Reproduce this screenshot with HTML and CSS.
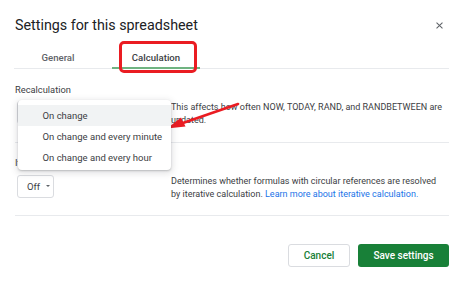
FILE: index.html
```html
<!DOCTYPE html>
<html>
<head>
<meta charset="utf-8">
<title>Settings for this spreadsheet</title>
<link rel="stylesheet" href="styles.css">
</head>
<body>
<div class="dialog">
  <header class="head">
    <h1 class="title">Settings for this spreadsheet</h1>
    <svg class="close" viewBox="0 0 8 8" aria-label="Close"><path d="M0.6 0.6L7.4 7.4M7.4 0.6L0.6 7.4"/></svg>
  </header>
  <nav class="tabs">
    <div class="tab">General</div>
    <div class="tab active">Calculation</div>
  </nav>
  <section class="sec">
    <div class="label">Recalculation</div>
    <div class="row">
      <div class="ctl">
        <div class="select wide">On change<span class="caret"></span></div>
        <ul class="menu">
          <li class="item hl">On change</li>
          <li class="item">On change and every minute</li>
          <li class="item">On change and every hour</li>
        </ul>
      </div>
      <p class="desc">This affects how often NOW, TODAY, RAND, and RANDBETWEEN are updated.</p>
    </div>
  </section>
  <section class="sec">
    <div class="label">Iterative calculation</div>
    <div class="row">
      <div class="ctl">
        <div class="select">Off<span class="caret"></span></div>
      </div>
      <p class="desc">Determines whether formulas with circular references are resolved by iterative calculation. <a class="link">Learn more about iterative calculation.</a></p>
    </div>
  </section>
  <footer class="foot">
    <button class="btn ghost">Cancel</button>
    <button class="btn primary">Save settings</button>
  </footer>
</div>
<div class="callout-box"></div>
<svg class="arrow" viewBox="0 0 464 281">
  <line x1="238" y1="104" x2="180" y2="124"/>
  <polygon points="167,128.5 181,117.5 185.5,126.5"/>
</svg>
</body>
</html>
```
FILE: styles.css
```css
* { box-sizing: border-box; margin: 0; padding: 0; }
html, body { width: 464px; height: 281px; overflow: hidden; background: #fff; }
body {
  font-family: Roboto, "Liberation Sans", Arial, sans-serif;
  color: #3c4043;
  position: relative;
}
.dialog { padding: 15px 15px 0; }

.head { display: flex; align-items: center; justify-content: space-between; height: 20px; }
.title { font-size: 14.3px; font-weight: 400; line-height: 20px; color: #202124; }
.close { width: 7px; height: 7px; margin-right: 6px; margin-top: 1px; fill: none; stroke: #5f6368; stroke-width: 1.2; }

.tabs { display: flex; gap: 10px; margin: 12px 0 0 -1px; border-bottom: 1px solid #e8eaed; }
.tab {
  position: relative;
  width: 88px; height: 21px;
  padding-top: 1px;
  line-height: 20px;
  text-align: center;
  font-size: 9.6px; font-weight: 500;
  color: #5f6368;
}
.tab.active { color: #3c4043; }
.tab.active::after {
  content: ""; position: absolute; left: 0; right: 0; bottom: -1px; height: 2px;
  background: #6fb381;
}

.sec { padding: 14.5px 0 14.5px; border-bottom: 1px solid #e8eaed; }
.label { font-size: 9.3px; line-height: 12px; color: #3c4043; }
.row { display: grid; grid-template-columns: 156px 1fr; margin-top: 5.5px; }
.ctl { position: relative; }
.select {
  display: flex; align-items: center;
  width: 37px; height: 23px; margin-left: 2px;
  padding-left: 9px;
  border: 1px solid #dadce0; border-radius: 3px;
  font-size: 9.5px; color: #3c4043;
  white-space: nowrap;
}
.select.wide { width: 80px; }
.caret {
  margin-left: auto; margin-right: 3px; flex: none;
  width: 0; height: 0;
  border-left: 2px solid transparent; border-right: 2px solid transparent;
  border-top: 2.2px solid #5f6368;
}
.desc { font-size: 9px; line-height: 13px; color: #3c4043; padding-right: 5px; }
.link { color: #1a73e8; }

.menu {
  position: absolute; z-index: 2;
  left: 2.5px; top: -1px;
  width: 153px;
  padding: 5px 0 2px;
  list-style: none;
  background: #fff;
  border-radius: 4px;
  box-shadow: 0 1px 2px rgba(60,64,67,.28), 0 2px 6px 2px rgba(60,64,67,.13);
}
.item { height: 21px; line-height: 21px; padding-left: 25px; font-size: 9.5px; color: #3c4043; white-space: nowrap; }
.item.hl { background: #f1f3f4; }

.foot { display: flex; justify-content: flex-end; gap: 8px; margin-top: 27.5px; }
.btn {
  height: 23px; border-radius: 3px;
  font-family: Roboto, "Liberation Sans", Arial, sans-serif;
  font-size: 10px; font-weight: 500;
}
.ghost { width: 62px; background: #fff; border: 1px solid #dadce0; color: #188038; }
.primary { width: 91px; background: #188038; border: none; color: #fff; }

.callout-box {
  position: absolute; left: 119px; top: 41px; width: 78px; height: 32px;
  border: 3px solid #ea1c22; border-radius: 5px;
}
.arrow { position: absolute; left: 0; top: 0; width: 464px; height: 281px; pointer-events: none; }
.arrow line { stroke: #ea1c22; stroke-width: 2.6; stroke-linecap: round; }
.arrow polygon { fill: #ea1c22; }
```
